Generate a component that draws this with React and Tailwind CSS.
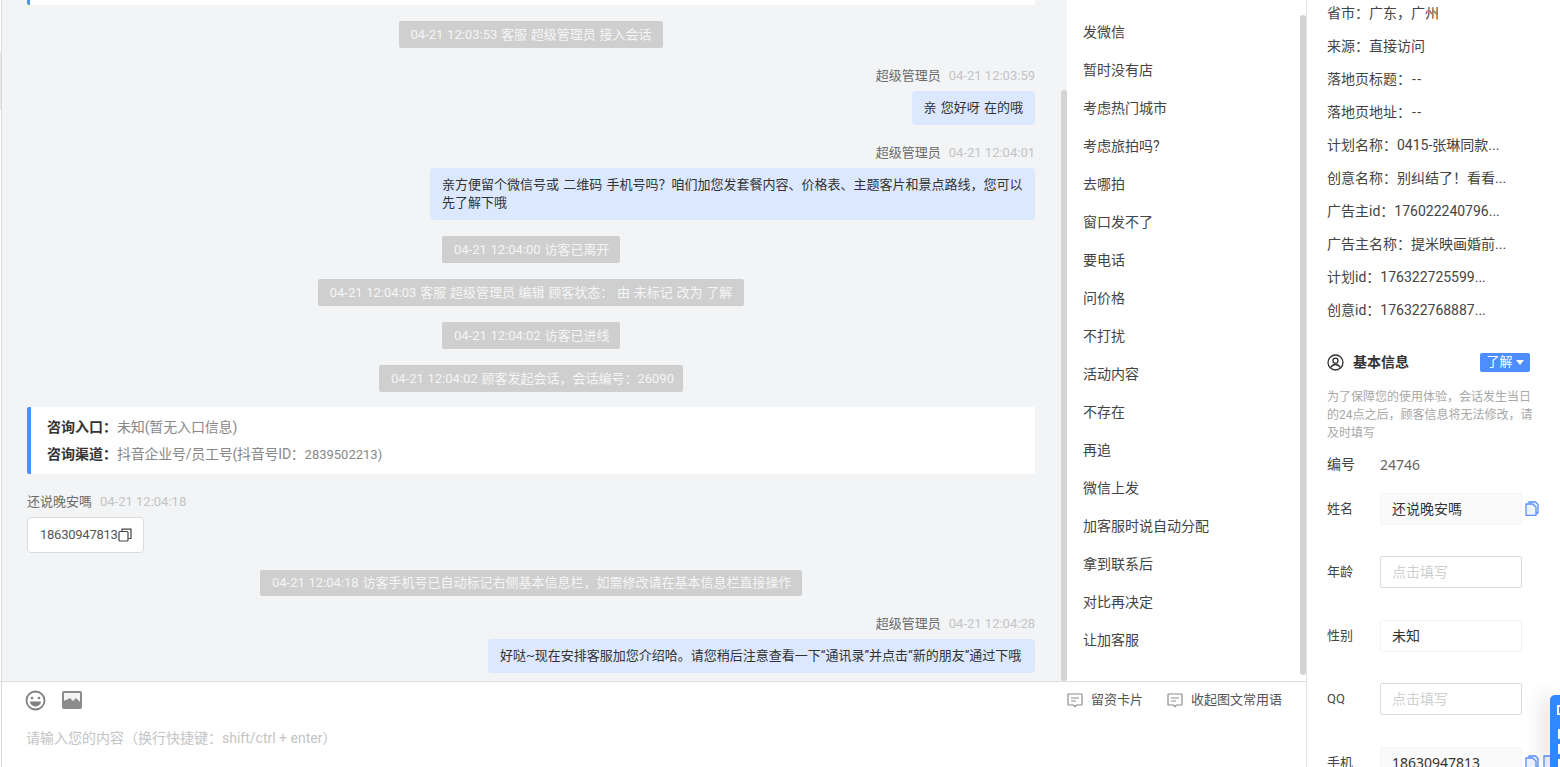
import React from "react";

const FONT = "font-['Roboto','Noto_Sans_CJK_SC',sans-serif]";
const WIDE = "font-['Noto_Sans','Noto_Sans_CJK_SC',sans-serif]";

function Sys({ children, className = "" }) {
  return (
    <div className={`self-center h-[27px] px-3 flex items-center rounded-[2px] bg-[#cfcfcf] text-[#f5f5f5] text-[13px] whitespace-nowrap [word-spacing:0.5px] ${className}`}>
      {children}
    </div>
  );
}

function Out({ time, children, className = "", mt }) {
  return (
    <div className={`flex flex-col items-end ${mt}`}>
      <div className="h-[16px] pt-px flex items-center gap-[8px] text-[13px] text-[#6b6b6b]">
        <span>超级管理员</span>
        <span className="text-[#c4c4c4]">{time}</span>
      </div>
      <div className={`mt-2 px-3 py-[8px] rounded-[4px] bg-[#dbe8fe] text-[13px] leading-[18px] text-[#333] [word-spacing:1px] ${className}`}>
        {children}
      </div>
    </div>
  );
}

function CommentIcon() {
  return (
    <svg width="16" height="15" viewBox="0 0 16 15" fill="none" stroke="#8c8c8c" strokeWidth="1.2">
      <path d="M1.6 1h12.8a.6.6 0 0 1 .6.6v9.8a.6.6 0 0 1-.6.6H9.500L8 13.600 6.500 12H1.600a.6.6 0 0 1-.6-.6V1.600a.6.6 0 0 1 .6-.6z" />
      <path d="M4 5h8M4 8h5" />
    </svg>
  );
}

function CopyIcon({ className = "" }) {
  return (
    <svg className={className} width="14" height="15" viewBox="0 0 14 15" fill="#eef3ff" stroke="#5b8ff9" strokeWidth="1.3">
      <path d="M4 2.500V1h6.500L13 3.500V12h-2" />
      <path d="M1 3h6.500L11 6v8.300H1z" />
    </svg>
  );
}

function InfoRow({ children }) {
  return <div className="h-[33px] flex items-center whitespace-nowrap">{children}</div>;
}

function Field({ label, value, placeholder, filled, copy, mt = "", children }) {
  return (
    <div className={`flex items-center h-[33px] ${mt}`}>
      <span className="w-[53px] text-[13px] text-[#444] shrink-0">{label}</span>
      <div
        className={`w-[142px] h-[32px] shrink-0 px-[11px] flex items-center rounded-[2px] border text-[14px] ${WIDE} ${
          filled ? "bg-[#fafafa] border-[#f5f5f5] text-[#333]" : placeholder ? "bg-white border-[#dcdcdc] text-[#cfcfcf]" : "bg-white border-[#f2f2f2] text-[#333]"
        }`}
      >
        {value || placeholder}
      </div>
      {copy && <CopyIcon className="ml-[3px] shrink-0" />}
      {children}
    </div>
  );
}

const quick = ["发微信","暂时没有店","考虑热门城市","考虑旅拍吗?","去哪拍","窗口发不了","要电话","问价格","不打扰","活动内容","不存在","再追","微信上发","加客服时说自动分配","拿到联系后","对比再决定","让加客服"];

export default function App() {
  return (
    <div className={`relative w-[1560px] h-[767px] overflow-hidden flex bg-white ${FONT}`}>
      <div className="absolute left-0 top-[52px] w-px h-[58px] bg-[#e6e6e6]" />
      <div className="w-[1307px] shrink-0 h-full flex flex-col border-r border-[#e3e3e3]">
        <div className="h-[682px] shrink-0 flex border-b border-[#dcdcdc] overflow-hidden">
          <div className="relative w-[1066px] shrink-0 h-full bg-[#f3f4f6] border-l border-[#dcdcdc] ml-px pl-[25px] pr-[32px] flex flex-col">
            <div className="h-[5px] shrink-0 bg-white border-l-[3px] border-[#4d8dff] rounded-bl-[2px]" />
            <Sys className="mt-4">04-21 12:03:53 客服 超级管理员 接入会话</Sys>
            <Out time="04-21 12:03:59" mt="mt-[19px]">亲 您好呀 在的哦</Out>
            <Out time="04-21 12:04:01" mt="mt-[19px]" className="w-[605px]">
              亲方便留个微信号或 二维码 手机号吗？咱们加您发套餐内容、价格表、主题客片和景点路线，您可以先了解下哦
            </Out>
            <Sys className="mt-4 w-[178px]">04-21 12:04:00 访客已离开</Sys>
            <Sys className="mt-4">04-21 12:04:03 客服 超级管理员 编辑 顾客状态： 由 未标记 改为 了解</Sys>
            <Sys className="mt-4 w-[178px]">04-21 12:04:02 访客已进线</Sys>
            <Sys className="mt-4 w-[304px]">04-21 12:04:02 顾客发起会话，会话编号：26090</Sys>
            <div className="mt-[15px] h-[67px] shrink-0 bg-white border-l-[4px] border-[#4d8dff] rounded-l-[2px] pl-[16px] flex flex-col justify-center gap-[9px] text-[14px] leading-[18px]">
              <div><b className="font-semibold text-[#333]">咨询入口：</b><span className="text-[#888] tracking-[-0.15px]">未知(暂无入口信息)</span></div>
              <div><b className="font-semibold text-[#333]">咨询渠道：</b><span className="text-[#888] tracking-[-0.25px]">抖音企业号/员工号(抖音号ID：<span className="text-[13px] tracking-normal">2839502213)</span></span></div>
            </div>
            <div className="mt-[20px] h-[16px] flex items-center gap-[8px] text-[13px] text-[#6b6b6b]">
              <span>还说晚安嗎</span>
              <span className="text-[#c4c4c4]">04-21 12:04:18</span>
            </div>
            <div className="mt-[7px] self-start h-[36px] w-[117px] flex items-center pl-[12px] bg-white border border-[#dcdcdc] rounded-[4px] text-[13px] tracking-[-0.25px] text-[#555]">
              18630947813
              <svg width="14" height="14" viewBox="0 0 14 14" fill="none" stroke="#444" strokeWidth="1.200" className="shrink-0">
                <rect x="1" y="3.500" width="9" height="9.500" rx="1" />
                <path d="M4 3V1.200h9v9.300h-2.500" />
              </svg>
            </div>
            <Sys className="mt-[17px] !h-[26px] w-[542px]">04-21 12:04:18 访客手机号已自动标记右侧基本信息栏，如需修改请在基本信息栏直接操作</Sys>
            <Out time="04-21 12:04:28" mt="mt-[19px]" className="w-[547px] whitespace-nowrap">好哒~现在安排客服加您介绍哈。请您稍后注意查看一下“通讯录”并点击“新的朋友”通过下哦</Out>
            <div className="absolute right-0 top-[90px] bottom-0 w-[6px] rounded-[3px] bg-[#d3d3d3]" />
          </div>
          <div className="relative flex-1 bg-white pt-[13px] pl-[16px]">
            {quick.map((q) => (
              <div key={q} className="h-[38px] flex items-center text-[14px] text-[#444]">{q}</div>
            ))}
            <div className="absolute right-0 top-[15px] h-[660px] w-[6px] rounded-[3px] bg-[#d3d3d3]" />
          </div>
        </div>
        <div className="flex-1 bg-white border-l border-[#dcdcdc] ml-px relative">
          <div className="flex items-center h-[36px] pl-[23px] pr-[24px]">
            <svg width="21" height="21" viewBox="0 0 21 21" fill="none" stroke="#808080" strokeWidth="1.800" className="mt-[1px]">
              <circle cx="10.500" cy="10.500" r="9" />
              <circle cx="7" cy="8" r="1.300" fill="#808080" stroke="none" />
              <circle cx="14" cy="8" r="1.300" fill="#808080" stroke="none" />
              <path d="M5 11.500h11a5.500 5 0 0 1-11 0z" fill="#808080" stroke="none" />
            </svg>
            <svg width="20" height="18" viewBox="0 0 20 18" className="ml-[16px]">
              <rect width="20" height="18" rx="2" fill="#8c8c8c" />
              <path d="M2 10V2h16v9l-4-4-3 3-3-3z" fill="#f4f4f4" />
            </svg>
            <div className="ml-auto flex items-center gap-[24px] text-[13px] text-[#555]">
              <span className="flex items-center gap-2"><CommentIcon />留资卡片</span>
              <span className="flex items-center gap-2"><CommentIcon />收起图文常用语</span>
            </div>
          </div>
          <div className="pl-[24px] mt-[10px] text-[14px] leading-[20px] text-[#c4c4c4]">请输入您的内容（换行快捷键：shift/ctrl + enter）</div>
        </div>
      </div>

      <div className="flex-1 min-w-0 pl-[20px] text-[14px] text-[#444]">
        <div className="h-[30px] pb-[4px] flex items-center whitespace-nowrap">省市：广东，广州</div>
        <InfoRow>来源：直接访问</InfoRow>
        <InfoRow>落地页标题：<span className="ml-px tracking-[1.5px]">--</span></InfoRow>
        <InfoRow>落地页地址：<span className="ml-px tracking-[1.5px]">--</span></InfoRow>
        <InfoRow>计划名称：0415-张琳同款...</InfoRow>
        <InfoRow>创意名称：别纠结了！看看...</InfoRow>
        <InfoRow>广告主id：176022240796...</InfoRow>
        <InfoRow>广告主名称：提米映画婚前...</InfoRow>
        <InfoRow>计划id：176322725599...</InfoRow>
        <InfoRow>创意id：176322768887...</InfoRow>
        <div className="mt-[25px] w-[203px] h-[20px] flex items-center">
          <svg width="17" height="17" viewBox="0 0 17 17" fill="none" stroke="#333" strokeWidth="1.300">
            <circle cx="8.500" cy="8.500" r="7.500" />
            <circle cx="8.500" cy="6.700" r="2.500" />
            <path d="M3.800 13.500c1-2 2.700-3 4.700-3s3.700 1 4.700 3" />
          </svg>
          <span className="ml-[9px] font-semibold text-[#333]">基本信息</span>
          <span className="ml-auto w-[50px] h-[19px] rounded-[2px] bg-[#4d8dff] text-white flex items-center justify-center text-[13px]">
            了解<span className="ml-[3px] w-0 h-0 border-x-[4px] border-x-transparent border-t-[5px] border-t-white" />
          </span>
        </div>
        <div className="mt-[16px] w-[206px] text-[12px] leading-[18px] text-[#a8a8a8]">为了保障您的使用体验，会话发生当日的24点之后，顾客信息将无法修改，请及时填写</div>
        <div className="mt-[6px] h-[32px] flex items-center">
          <span className="w-[53px] text-[#444]">编号</span>
          <span className={`text-[#666] ${WIDE}`}>24746</span>
        </div>
        <Field label="姓名" value="还说晚安嗎" filled copy mt="mt-[12px]" />
        <Field label="年龄" placeholder="点击填写" mt="mt-[30px]" />
        <Field label="性别" value="未知" mt="mt-[31px]" />
        <Field label="QQ" placeholder="点击填写" mt="mt-[30px]" />
        <Field label="手机" value="18630947813" filled copy mt="mt-[31px]">
          <svg width="8" height="15" viewBox="0 0 8 15" fill="#eef3ff" stroke="#5b8ff9" strokeWidth="1.3" className="ml-[4px] shrink-0">
            <path d="M8 1H1v13h7" />
          </svg>
        </Field>
      </div>

      <div className="absolute right-0 top-[695px] w-[10px] h-[72px] rounded-tl-[5px] bg-[#2f88ff] shadow-[-8px_0_18px_rgba(0,0,0,0.14)] overflow-hidden">
        <div className="mt-[10px] ml-[7px] w-[6px] h-[10px] border-2 border-white" />
        <div className="mt-[14px] ml-[8px] w-[2px] h-[10px] bg-white" />
        <div className="mt-[5px] ml-[8px] w-[2px] h-[10px] bg-white" />
        <div className="mt-[5px] ml-[8px] w-[2px] h-[10px] bg-white" />
      </div>
    </div>
  );
}
